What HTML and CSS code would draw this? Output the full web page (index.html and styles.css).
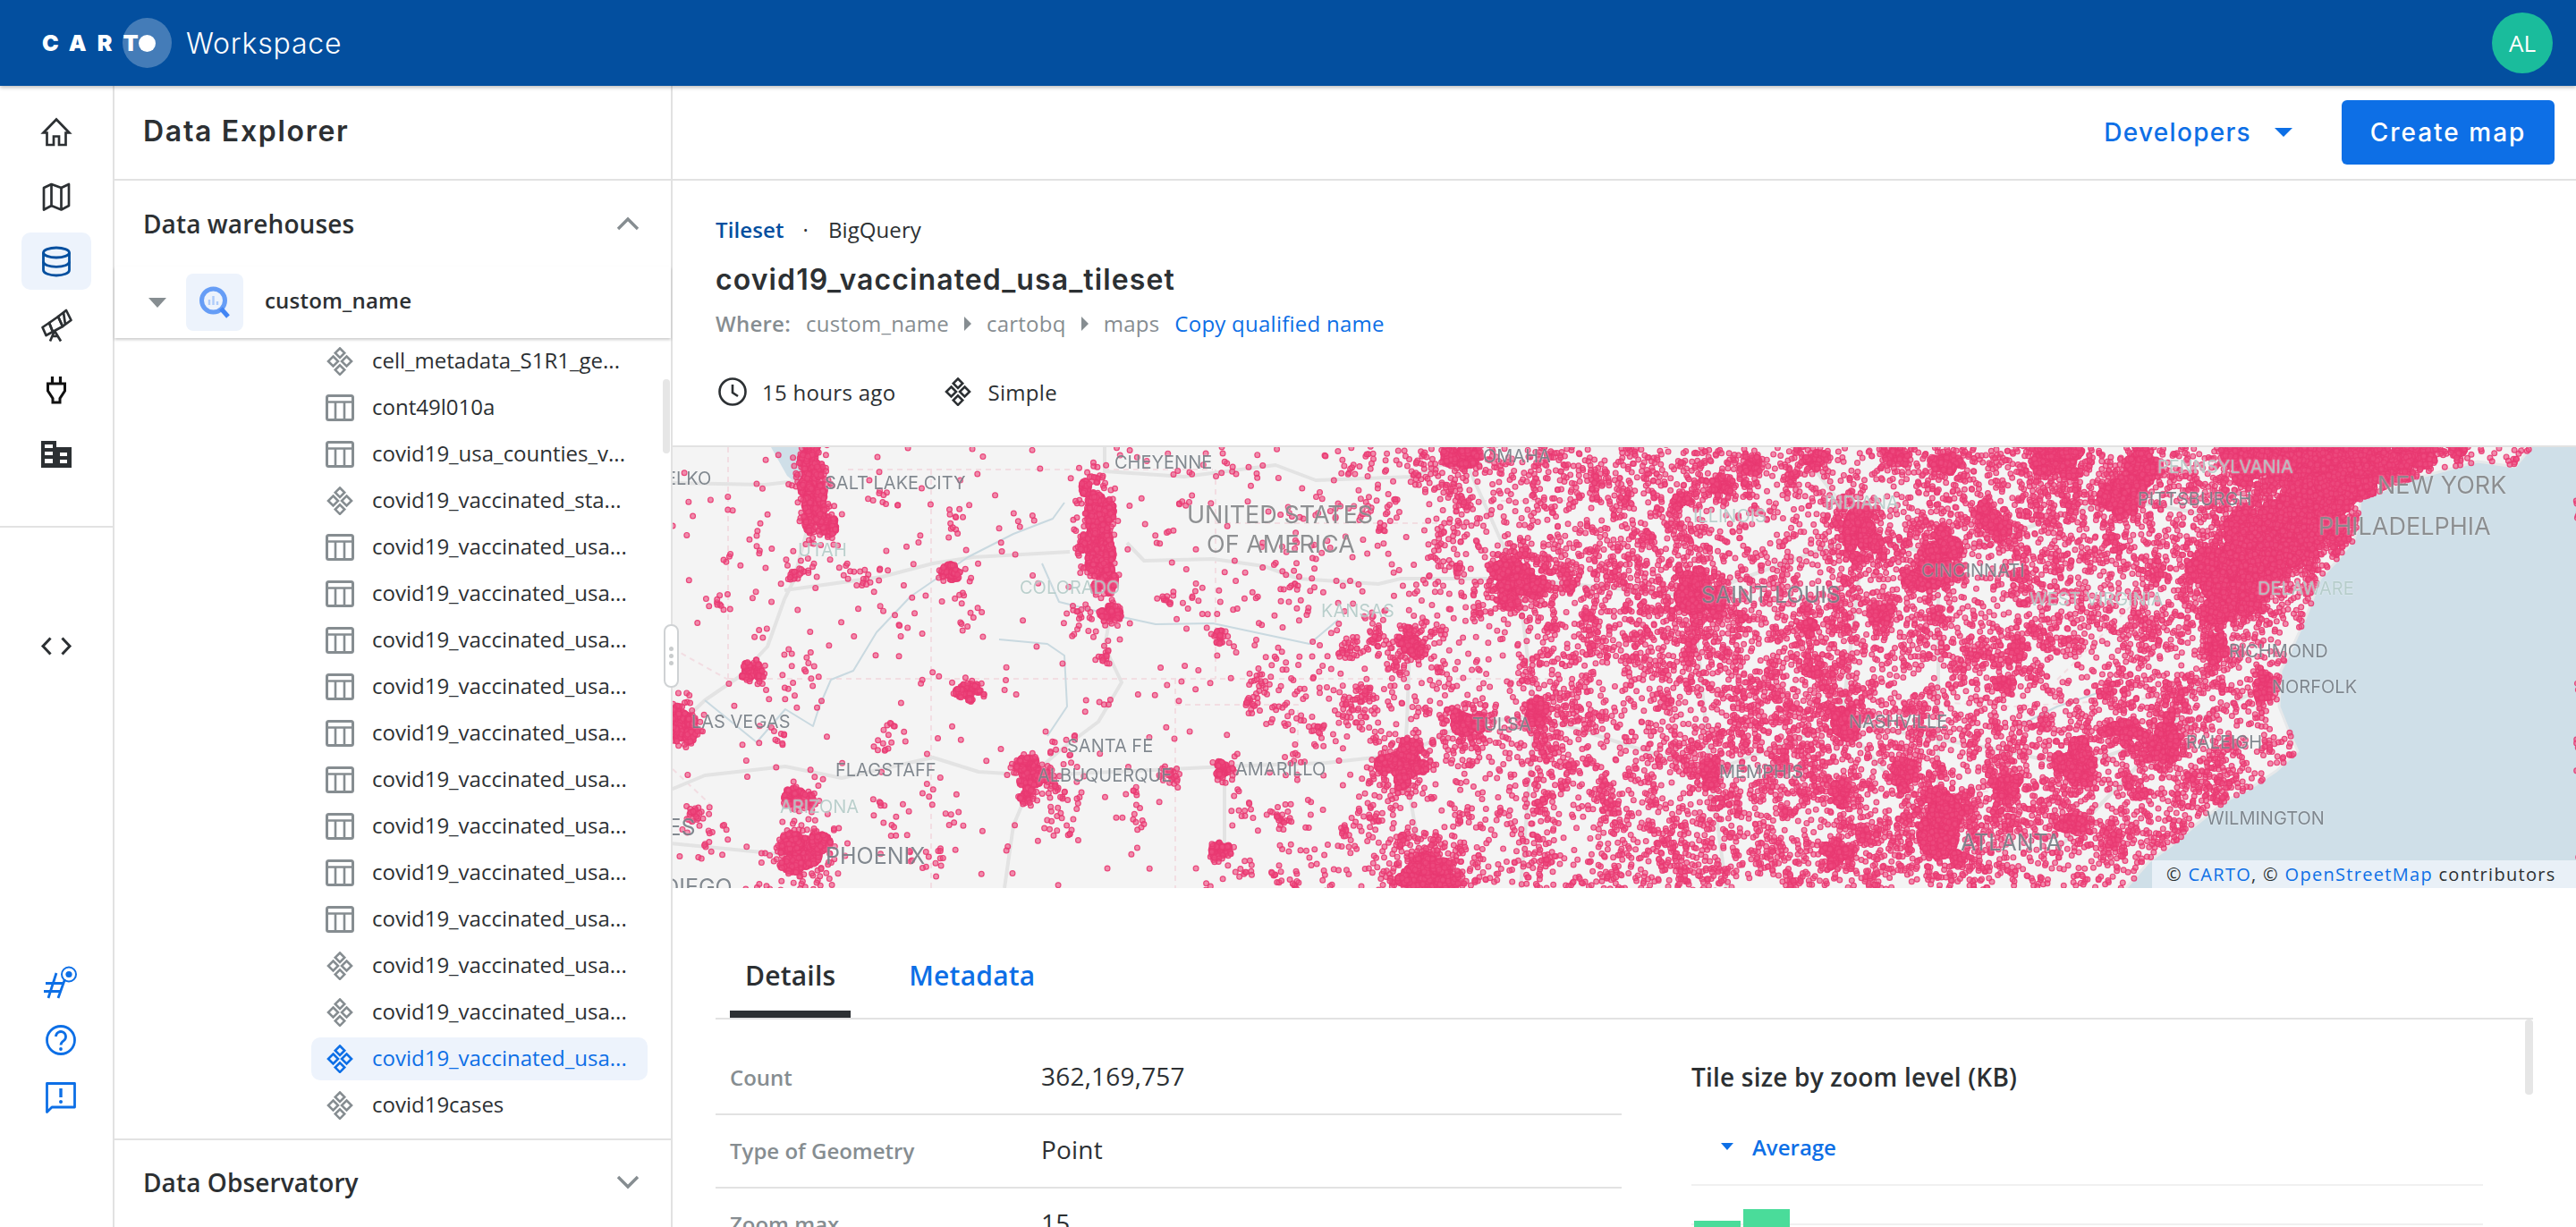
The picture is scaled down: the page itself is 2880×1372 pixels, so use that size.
FILE: index.html
```html
<!DOCTYPE html>
<html lang="en">
<head>
<meta charset="utf-8">
<title>CARTO Workspace</title>
<link rel="stylesheet" href="styles.css">
</head>
<body>
<svg class="defs" width="0" height="0" aria-hidden="true">
  <defs>
    <symbol id="i-tile" viewBox="0 0 32 32">
      <g fill="none" stroke="currentColor" stroke-width="2.6" stroke-linejoin="miter">
        <path d="M16 1.500L21.200 6.700 16 11.900 10.800 6.700Z"/>
        <path d="M8.500 10.500L14 16 8.500 21.500 3 16Z"/>
        <path d="M23.500 10.500L29 16 23.500 21.500 18 16Z"/>
        <path d="M16 20.400L21.200 25.600 16 30.800 10.800 25.600Z"/>
      </g>
    </symbol>
    <symbol id="i-table" viewBox="0 0 32 32">
      <rect x="1.5" y="2.5" width="29" height="27" rx="2" fill="none" stroke="currentColor" stroke-width="3"/>
      <path d="M1.5 9.500H30.500M11 9.500V29M21 9.500V29" fill="none" stroke="currentColor" stroke-width="2.6"/>
    </symbol>
  </defs>
</svg>

<header class="topbar">
  <div class="logo">
    <span class="logo-halo"></span>
    <span class="logo-text">CART</span><span class="logo-dot"></span>
    <span class="logo-name">Workspace</span>
  </div>
  <div class="avatar">AL</div>
</header>

<div class="app">
  <nav class="rail">
    <div class="rail-top">
      <a class="rail-item">
        <svg class="rail-icon" viewBox="0 0 40 40"><path d="M20 5.500L5.500 20.500H9.500V34H17V24.500H23V34H30.500V20.500H34.500Z" fill="none" stroke="currentColor" stroke-width="2.700" stroke-linejoin="miter"/></svg>
      </a>
      <a class="rail-item">
        <svg class="rail-icon" viewBox="0 0 40 40"><path d="M6 10L14.500 6 25.500 10 34 6V30L25.500 34.500 14.500 30 6 34.500ZM14.500 6V30M25.500 10V34.500" fill="none" stroke="currentColor" stroke-width="2.700" stroke-linejoin="round"/></svg>
      </a>
      <a class="rail-item rail-item-active">
        <svg class="rail-icon" viewBox="0 0 40 40"><g fill="none" stroke="currentColor" stroke-width="2.800"><ellipse cx="20" cy="10.500" rx="14.500" ry="5.500"/><path d="M5.500 10.500V30C5.500 33.500 12 36 20 36S34.500 33.500 34.500 30V10.500"/><path d="M5.500 20.500C5.500 24 12 26.300 20 26.300S34.500 24 34.500 20.500"/></g></svg>
      </a>
      <a class="rail-item">
        <svg class="rail-icon" viewBox="0 0 40 40"><g fill="none" stroke="currentColor" stroke-width="2.700" stroke-linejoin="round"><path d="M22 10L31 3 36.500 14 27 21Z"/><path d="M28 5.500L30 19"/><path d="M12 17L22 10 27 21 16 27Z"/><path d="M4.500 22L12 17 16 27 8.500 31Z"/><path d="M18 26L13 37.500M18 26L25 37.500M15.500 32H22"/></g></svg>
      </a>
      <a class="rail-item rail-plug">
        <svg class="rail-icon" viewBox="0 0 40 40"><path d="M15.500 5V13M24.500 5V13" fill="none" stroke="currentColor" stroke-width="3.200"/><path d="M10.500 13H29.500V21L24 29.500V34H16V29.500L10.500 21Z" fill="none" stroke="currentColor" stroke-width="3" stroke-linejoin="miter"/></svg>
      </a>
      <a class="rail-item">
        <svg class="rail-icon" viewBox="0 0 40 40"><path d="M3 5H20V12H37V35H3ZM7 9V13H16V9ZM7 17V21H16V17ZM7 25V30H16V25ZM24 18V22H32V18ZM24 26V30H32V26Z" fill="currentColor" fill-rule="evenodd"/></svg>
      </a>
    </div>
    <div class="rail-mid">
      <a class="rail-item">
        <svg class="rail-icon" viewBox="0 0 40 40"><path d="M13.500 11.500L5 20.500 13.500 29.500M26.500 11.500L35 20.500 26.500 29.500" fill="none" stroke="currentColor" stroke-width="3"/></svg>
      </a>
    </div>
    <div class="rail-bottom">
      <a class="rail-item">
        <svg class="rail-icon" viewBox="0 0 40 40"><g fill="none" stroke="currentColor" stroke-width="2.800"><path d="M15 9L6 37M24.500 16L17 37M3 20.500H24M1 29.500H20"/><ellipse cx="29" cy="10.500" rx="8" ry="8" stroke-width="2"/></g><circle cx="29" cy="10.500" r="3.600" fill="currentColor"/></svg>
      </a>
      <a class="rail-item">
        <svg class="rail-icon" viewBox="0 0 40 40"><circle cx="20" cy="20" r="15.500" fill="none" stroke="currentColor" stroke-width="2.800"/><path d="M14.500 16A5.500 5.500 0 1 1 23.500 20.300C21 22 20 23 20 25.500" fill="none" stroke="currentColor" stroke-width="2.800"/><circle cx="20" cy="30" r="1.900" fill="currentColor"/></svg>
      </a>
      <a class="rail-item">
        <svg class="rail-icon" viewBox="0 0 40 40"><path d="M4.500 4.500H35.500V31H10L4.500 36.500Z" fill="none" stroke="currentColor" stroke-width="2.800" stroke-linejoin="round"/><path d="M20 10V20" fill="none" stroke="currentColor" stroke-width="3.400"/><circle cx="20" cy="25" r="2" fill="currentColor"/></svg>
      </a>
    </div>
  </nav>

  <aside class="panel">
    <div class="panel-title"><h1>Data Explorer</h1></div>
    <div class="acc-head">
      <h2>Data warehouses</h2>
      <svg class="chev" viewBox="0 0 28 18"><path d="M3 15L14 4 25 15" fill="none" stroke="currentColor" stroke-width="3.400"/></svg>
    </div>
    <div class="tree-root">
      <span class="caret caret-grey"></span>
      <span class="bq-box">
        <svg class="bq" viewBox="0 0 36 36"><circle cx="16.500" cy="16" r="13" fill="none" stroke="#669df6" stroke-width="5"/><path d="M12 15V21M16.500 11V21M21 17V21" stroke="#aecbfa" stroke-width="2.400"/><path d="M25 25L33 34" stroke="#4285f4" stroke-width="5"/></svg>
      </span>
      <span class="tree-name">custom_name</span>
    </div>
    <ul class="list">
      <li class="row"><svg class="row-icon"><use href="#i-tile"/></svg><span class="row-text">cell_metadata_S1R1_ge...</span></li>
      <li class="row"><svg class="row-icon"><use href="#i-table"/></svg><span class="row-text">cont49l010a</span></li>
      <li class="row"><svg class="row-icon"><use href="#i-table"/></svg><span class="row-text">covid19_usa_counties_v...</span></li>
      <li class="row"><svg class="row-icon"><use href="#i-tile"/></svg><span class="row-text">covid19_vaccinated_sta...</span></li>
      <li class="row"><svg class="row-icon"><use href="#i-table"/></svg><span class="row-text">covid19_vaccinated_usa...</span></li>
      <li class="row"><svg class="row-icon"><use href="#i-table"/></svg><span class="row-text">covid19_vaccinated_usa...</span></li>
      <li class="row"><svg class="row-icon"><use href="#i-table"/></svg><span class="row-text">covid19_vaccinated_usa...</span></li>
      <li class="row"><svg class="row-icon"><use href="#i-table"/></svg><span class="row-text">covid19_vaccinated_usa...</span></li>
      <li class="row"><svg class="row-icon"><use href="#i-table"/></svg><span class="row-text">covid19_vaccinated_usa...</span></li>
      <li class="row"><svg class="row-icon"><use href="#i-table"/></svg><span class="row-text">covid19_vaccinated_usa...</span></li>
      <li class="row"><svg class="row-icon"><use href="#i-table"/></svg><span class="row-text">covid19_vaccinated_usa...</span></li>
      <li class="row"><svg class="row-icon"><use href="#i-table"/></svg><span class="row-text">covid19_vaccinated_usa...</span></li>
      <li class="row"><svg class="row-icon"><use href="#i-table"/></svg><span class="row-text">covid19_vaccinated_usa...</span></li>
      <li class="row"><svg class="row-icon"><use href="#i-tile"/></svg><span class="row-text">covid19_vaccinated_usa...</span></li>
      <li class="row"><svg class="row-icon"><use href="#i-tile"/></svg><span class="row-text">covid19_vaccinated_usa...</span></li>
      <li class="row row-active"><svg class="row-icon"><use href="#i-tile"/></svg><span class="row-text">covid19_vaccinated_usa...</span></li>
      <li class="row"><svg class="row-icon"><use href="#i-tile"/></svg><span class="row-text">covid19cases</span></li>
    </ul>
    <div class="acc-head acc-bottom">
      <h2>Data Observatory</h2>
      <svg class="chev" viewBox="0 0 28 18"><path d="M3 3L14 14 25 3" fill="none" stroke="currentColor" stroke-width="3.400"/></svg>
    </div>
    <span class="list-thumb"></span>
    <span class="resize-handle"><i></i><i></i><i></i></span>
  </aside>

  <main class="main">
    <div class="actions">
      <a class="dev-link">Developers</a>
      <span class="caret caret-blue"></span>
      <a class="btn">Create map</a>
    </div>

    <section class="info">
      <div class="kind"><span class="kind-type">Tileset</span><span class="kind-sep">·</span><span>BigQuery</span></div>
      <h3 class="ds-title">covid19_vaccinated_usa_tileset</h3>
      <div class="where">
        <span class="where-label">Where:</span>
        <span>custom_name</span><span class="crumb"></span>
        <span>cartobq</span><span class="crumb"></span>
        <span>maps</span>
        <a class="copy">Copy qualified name</a>
      </div>
      <div class="meta">
        <svg class="meta-icon" viewBox="0 0 32 32"><circle cx="16" cy="16" r="14.500" fill="none" stroke="currentColor" stroke-width="2.600"/><path d="M16 8V17L22 21" fill="none" stroke="currentColor" stroke-width="2.600"/></svg>
        <span class="meta-text">15 hours ago</span>
        <svg class="meta-icon meta-tile"><use href="#i-tile"/></svg>
        <span class="meta-text">Simple</span>
      </div>
    </section>

    <section class="map">
      <canvas id="map-canvas" class="map-canvas" width="2128" height="493"></canvas>
      <span class="lbl" style="left:-8px;top:35px">ELKO</span>
      <span class="lbl" style="left:170px;top:40px">SALT LAKE CITY</span>
      <span class="lbl" style="left:494px;top:17px">CHEYENNE</span>
      <span class="lbl" style="left:906px;top:10px">OMAHA</span>
      <span class="lbl lbl-xl" style="left:575px;top:75px">UNITED STATES</span>
      <span class="lbl lbl-xl" style="left:597px;top:108px">OF AMERICA</span>
      <span class="lbl lbl-f" style="left:140px;top:115px">UTAH</span>
      <span class="lbl lbl-f" style="left:388px;top:157px">COLORADO</span>
      <span class="lbl lbl-f" style="left:725px;top:183px">KANSAS</span>
      <span class="lbl" style="left:21px;top:307px">LAS VEGAS</span>
      <span class="lbl" style="left:441px;top:334px">SANTA FE</span>
      <span class="lbl" style="left:408px;top:367px">ALBUQUERQUE</span>
      <span class="lbl" style="left:182px;top:361px">FLAGSTAFF</span>
      <span class="lbl" style="left:629px;top:360px">AMARILLO</span>
      <span class="lbl lbl-f" style="left:120px;top:402px">ARIZONA</span>
      <span class="lbl lbl-lg" style="left:-145px;top:425px">LOS ANGELES</span>
      <span class="lbl lbl-lg" style="left:171px;top:457px">PHOENIX</span>
      <span class="lbl lbl-lg" style="left:-70px;top:492px">SAN DIEGO</span>
      <span class="lbl" style="left:894px;top:310px">TULSA</span>
      <span class="lbl lbl-xl" style="left:1906px;top:42px">NEW YORK</span>
      <span class="lbl" style="left:1638px;top:58px">PITTSBURGH</span>
      <span class="lbl lbl-xl" style="left:1840px;top:88px">PHILADELPHIA</span>
      <span class="lbl lbl-f" style="left:1141px;top:77px">ILLINOIS</span>
      <span class="lbl lbl-f" style="left:1288px;top:62px">INDIANA</span>
      <span class="lbl lbl-f" style="left:1660px;top:22px">PENNSYLVANIA</span>
      <span class="lbl" style="left:1396px;top:138px">CINCINNATI</span>
      <span class="lbl lbl-lg" style="left:1150px;top:165px">SAINT LOUIS</span>
      <span class="lbl lbl-f" style="left:1517px;top:170px">WEST VIRGINIA</span>
      <span class="lbl lbl-f" style="left:1772px;top:158px">DELAWARE</span>
      <span class="lbl" style="left:1740px;top:228px">RICHMOND</span>
      <span class="lbl" style="left:1788px;top:268px">NORFOLK</span>
      <span class="lbl" style="left:1315px;top:307px">NASHVILLE</span>
      <span class="lbl" style="left:1692px;top:330px">RALEIGH</span>
      <span class="lbl" style="left:1170px;top:363px">MEMPHIS</span>
      <span class="lbl" style="left:1715px;top:415px">WILMINGTON</span>
      <span class="lbl lbl-lg" style="left:1440px;top:442px">ATLANTA</span>
      <div class="attrib">© <a>CARTO</a>, © <a>OpenStreetMap</a> contributors</div>
    </section>

    <section class="details">
      <div class="tabs">
        <a class="tab tab-active">Details</a>
        <a class="tab">Metadata</a>
      </div>
      <div class="details-body">
        <div class="facts">
          <div class="fact"><span class="fact-label">Count</span><span class="fact-value">362,169,757</span></div>
          <div class="fact"><span class="fact-label">Type of Geometry</span><span class="fact-value">Point</span></div>
          <div class="fact"><span class="fact-label">Zoom max</span><span class="fact-value">15</span></div>
        </div>
        <div class="chart">
          <h4 class="chart-title">Tile size by zoom level (KB)</h4>
          <div class="chart-select"><span class="caret caret-small"></span><span>Average</span></div>
          <div class="plot">
            <div class="grid-line"></div>
            <div class="bars">
              <span class="bar" style="height:61px"></span>
              <span class="bar" style="height:74px"></span>
            </div>
          </div>
        </div>
        <span class="details-thumb"></span>
      </div>
    </section>
  </main>
</div>
<script src="map.js"></script>
</body>
</html>
```
FILE: styles.css
```css
* { box-sizing: border-box; }
html, body { margin: 0; height: 100%; overflow: hidden; background: #fff; }
body { font-family: "Open Sans", "Liberation Sans", sans-serif; color: #2c3033; width: 2880px; height: 1372px; display: flex; flex-direction: column; }
.defs { position: absolute; }
h1, h2, h3, h4, ul { margin: 0; padding: 0; }

/* top bar */
.topbar { height: 96px; flex: none; background: #034f9f; display: flex; align-items: center; justify-content: space-between; padding: 0 26px 0 47px; box-shadow: 0 2px 4px rgba(0,0,0,.25); position: relative; z-index: 3; }
.logo { display: flex; align-items: center; color: #fff; position: relative; }
.logo-halo { position: absolute; left: 90px; top: 50%; margin-top: -28px; width: 55px; height: 56px; border-radius: 50%; background: rgba(255,255,255,.26); }
.logo-text { font-family: Inter, sans-serif; font-weight: 900; font-size: 25px; letter-spacing: 12px; width: 108px; position: relative; }
.logo-dot { width: 19px; height: 19px; border-radius: 50%; background: #fff; position: relative; }
.logo-name { font-family: Inter, sans-serif; font-weight: 300; font-size: 32px; margin-left: 34px; position: relative; letter-spacing: .8px; }
.avatar { width: 68px; height: 68px; border-radius: 50%; background: #1abc9c; color: #fff; font-family: "Open Sans", sans-serif; font-size: 26px; display: flex; align-items: center; justify-content: center; }

.app { flex: 1; display: flex; min-height: 0; }

/* left rail */
.rail { width: 128px; flex: none; border-right: 2px solid #e2e2e2; display: flex; flex-direction: column; color: #2c3033; }
.rail-top { padding: 20px 0 48px; border-bottom: 2px solid #e2e2e2; display: flex; flex-direction: column; gap: 8px; }
.rail-mid { padding-top: 100px; }
.rail-item { display: flex; align-items: center; justify-content: center; width: 78px; height: 64px; margin-left: 24px; border-radius: 10px; }
.rail-item-active { background: #edf3fc; color: #034f9f; }
.rail-icon { width: 40px; height: 40px; display: block; }
.rail-plug { color: #111; }
.rail-bottom { margin-top: auto; padding: 0 0 113px 5px; color: #0d6fe6; display: flex; flex-direction: column; }

/* panel */
.panel { width: 624px; flex: none; border-right: 2px solid #e2e2e2; display: flex; flex-direction: column; position: relative; }
.panel-title { height: 106px; flex: none; border-bottom: 2px solid #e2e2e2; padding: 0 32px 4px; display: flex; align-items: center; }
h1 { font-family: Inter, sans-serif; font-weight: 600; font-size: 32px; letter-spacing: 1.700px; }
.acc-head { height: 96px; flex: none; display: flex; align-items: center; justify-content: space-between; padding: 0 34px 0 32px; }
h2 { font-size: 28px; font-weight: 600; letter-spacing: .1px; }
.chev { width: 28px; height: 18px; color: #868d91; }
.tree-root { height: 80px; flex: none; display: flex; align-items: center; padding: 0 0 0 38px; box-shadow: 0 2px 3px rgba(0,0,0,.2); position: relative; z-index: 1; }
.caret { display: block; width: 0; height: 0; border-style: solid; border-color: transparent; }
.caret-grey { border-width: 11px 10px 0; border-top-color: #868d91; }
.bq-box { width: 64px; height: 64px; border-radius: 8px; background: #edf3fc; margin-left: 22px; display: flex; align-items: center; justify-content: center; }
.bq { width: 36px; height: 36px; }
.tree-name { font-size: 24px; font-weight: 600; margin-left: 24px; padding-bottom: 5px; letter-spacing: .2px; }
.list { list-style: none; flex: 1; min-height: 0; overflow: hidden; }
.row { height: 52px; display: flex; align-items: center; margin-left: 220px; width: 376px; padding-left: 16px; position: relative; }
.row::before { content: ""; position: absolute; inset: 2px 0; border-radius: 10px; }
.row-active::before { background: #edf3fc; }
.row-icon { width: 32px; height: 32px; color: #868d91; flex: none; position: relative; }
.row-text { font-size: 24px; margin-left: 20px; white-space: nowrap; position: relative; padding-bottom: 3px; }
.row-active .row-icon, .row-active .row-text { color: #0d6fe6; }
.acc-bottom { border-top: 2px solid #e2e2e2; height: 99px; padding-bottom: 4px; }
.list-thumb { position: absolute; left: 613px; top: 328px; width: 8px; height: 83px; background: #e6e6e6; border-radius: 4px; z-index: 2; }
.resize-handle { position: absolute; left: 614px; top: 602px; width: 17px; height: 71px; border: 2px solid #cfd2d4; border-radius: 8px; background: #fff; z-index: 4; display: flex; flex-direction: column; align-items: center; justify-content: center; gap: 3px; }
.resize-handle i { width: 5px; height: 5px; border-radius: 50%; background: #c9cccd; }

/* main */
.main { flex: 1; min-width: 0; display: flex; flex-direction: column; }
.actions { height: 106px; flex: none; border-bottom: 2px solid #e2e2e2; display: flex; align-items: center; justify-content: flex-end; padding: 0 24px 0 0; }
.dev-link { font-family: Inter, sans-serif; font-weight: 500; font-size: 28px; color: #0d6fe6; letter-spacing: 1.300px; }
.caret-blue { border-width: 10px 10px 0; border-top-color: #0d6fe6; margin: 0 55px 0 26px; }
.btn { width: 238px; height: 72px; border-radius: 6px; background: #0d6fe6; color: #fff; font-family: Inter, sans-serif; font-weight: 500; font-size: 28px; letter-spacing: 2px; display: flex; align-items: center; justify-content: center; }

.info { height: 298px; flex: none; padding: 39px 0 0 48px; border-bottom: 2px solid #e2e2e2; display: flex; flex-direction: column; }
.kind { font-size: 24px; line-height: 32px; display: flex; letter-spacing: .1px; }
.kind-type { color: #034f9f; font-weight: 600; }
.kind-sep { margin: 0 22px 0 21px; color: #2c3033; }
.ds-title { font-family: Inter, sans-serif; font-weight: 600; font-size: 32px; line-height: 42px; margin-top: 19px; letter-spacing: 1.100px; }
.where { font-size: 24px; line-height: 32px; margin-top: 12px; color: #868d91; display: flex; align-items: center; letter-spacing: .25px; }
.where-label { font-weight: 600; margin-right: 17px; }
.crumb { width: 0; height: 0; border-style: solid; border-color: transparent; border-width: 8px 0 8px 8px; border-left-color: #868d91; margin: 0 17px; }
.copy { color: #0d6fe6; margin-left: 17px; }
.meta { display: flex; align-items: center; margin-top: 44px; height: 32px; font-size: 24px; letter-spacing: .3px; }
.meta-icon { width: 32px; height: 32px; margin-left: 3px; flex: none; color: #2c3033; }
.meta-text { margin-left: 17px; }
.meta-tile { margin-left: 54px; color: #2c3033; }

.map { height: 493px; flex: none; position: relative; overflow: hidden; background: #f4f4f4; }
.map-canvas { display: block; width: 2128px; height: 493px; }
.lbl { position: absolute; transform: translateY(-50%); font-family: Inter, sans-serif; font-size: 20px; line-height: 1; color: rgba(108,116,124,.85); white-space: nowrap; text-shadow: 0 0 2px rgba(255,255,255,.7); }
.lbl-lg { font-size: 25px; }
.lbl-xl { font-size: 27px; color: rgba(130,132,134,.9); }
.lbl-f { color: rgba(170,196,192,.8); }
.attrib { position: absolute; right: 0; bottom: 0; height: 31px; width: 474px; padding-left: 16px; background: #e9f0f7; font-size: 20px; line-height: 31px; letter-spacing: 1.300px; color: #2c3033; white-space: nowrap; }
.attrib a { color: #0d6fe6; }

.details { flex: 1; min-height: 0; padding: 49px 48px 0; }
.tabs { height: 98px; display: flex; gap: 48px; border-bottom: 2px solid #e2e2e2; }
.tab { height: 96px; padding: 0 17px; display: flex; align-items: center; font-size: 30px; font-weight: 600; color: #0d6fe6; letter-spacing: .2px; }
.tab-active { color: #2c3033; border-bottom: 8px solid #2c3033; padding-top: 8px; margin-left: 16px; }
.details-body { display: flex; position: relative; }
.facts { width: 1013px; flex: none; padding-top: 25px; }
.fact { height: 82px; border-bottom: 2px solid #e2e2e2; display: flex; align-items: center; padding-left: 16px; }
.fact-label { width: 348px; flex: none; font-size: 24px; color: #868d91; font-weight: 600; padding-bottom: 2px; }
.fact-value { font-size: 28px; padding-bottom: 5px; letter-spacing: .2px; }
.chart { margin-left: 78px; width: 885px; padding-top: 48px; }
.chart-title { font-size: 28px; font-weight: 600; line-height: 32px; letter-spacing: .2px; }
.chart-select { margin-top: 46px; height: 32px; display: flex; align-items: center; color: #0d6fe6; font-size: 24px; font-weight: 600; padding-left: 33px; }
.caret-small { border-width: 8px 7px 0; border-top-color: #0d6fe6; margin-right: 21px; }
.plot { margin-top: 26px; border-top: 2px solid #f0f0f0; height: 102px; position: relative; }
.grid-line { margin-top: 42px; border-top: 2px solid #f0f0f0; }
.bars { position: absolute; left: 3px; bottom: 0; display: flex; align-items: flex-end; gap: 3px; }
.bar { width: 52px; background: #4adc9a; display: block; }
.details-thumb { position: absolute; right: 0; top: 0; width: 9px; height: 84px; border-radius: 4px; background: #e6e6e6; }
```
FILE: map.js
```js
(function () {
  var cv = document.getElementById('map-canvas');
  var c = cv.getContext('2d');
  var OX = 752, OY = 500;
  c.translate(-OX, -OY);

  var seed = 1234567;
  function rnd() {
    seed |= 0; seed = seed + 0x6D2B79F5 | 0;
    var t = Math.imul(seed ^ seed >>> 15, 1 | seed);
    t = t + Math.imul(t ^ t >>> 7, 61 | t) ^ t;
    return ((t ^ t >>> 14) >>> 0) / 4294967296;
  }
  function gauss() { return (rnd() + rnd() + rnd() - 1.5) / 0.5; }

  function line(pts, color, w, dash) {
    c.beginPath();
    pts.forEach(function (p, i) { if (i) c.lineTo(p[0], p[1]); else c.moveTo(p[0], p[1]); });
    c.strokeStyle = color; c.lineWidth = w; c.lineJoin = 'round';
    c.setLineDash(dash || []); c.stroke(); c.setLineDash([]);
  }

  c.fillStyle = '#f4f4f4';
  c.fillRect(OX, OY, 2128, 493);

  var coast = [[2830,500],[2812,522],[2770,516],[2700,535],[2655,552],[2639,557],[2636,590],[2632,603],[2612,628],[2594,647],[2582,680],[2575,697],[2560,730],[2550,750],[2548,790],[2558,815],[2569,840],[2545,862],[2518,880],[2490,895],[2454,923],[2428,945],[2403,963],[2377,993]];
  var sea = new Path2D();
  coast.forEach(function (p, i) { if (i) sea.lineTo(p[0], p[1]); else sea.moveTo(p[0], p[1]); });
  sea.lineTo(2880, 993); sea.lineTo(2880, 500); sea.closePath();
  c.fillStyle = '#cfdfe8';
  c.fill(sea);
  line(coast, '#e6e8ea', 3);

  c.fillStyle = '#cfdfe8';
  c.beginPath(); c.moveTo(862,500); c.lineTo(900,500); c.lineTo(906,528); c.lineTo(892,542); c.lineTo(880,532); c.closePath(); c.fill();

  var dash = [6, 5], stateCol = '#f2dde2';
  [[[814,500],[814,760]],[[948,525],[1356,525]],[[1041,525],[1041,993]],[[814,759],[1750,759]],[[1359,525],[1359,759]],
   [[1314,759],[1314,993]],[[1314,788],[1451,788],[1451,880]],[[1359,585],[1668,585]],[[1656,560],[1752,560]],
   [[752,725],[814,760]],[[752,860],[800,905]],[[1900,770],[2250,790],[2420,780]],[[2300,760],[2420,640]],[[2140,890],[2300,880]]
  ].forEach(function (l) { line(l, stateCol, 2, dash); });

  var roads = [
    [[750,540],[855,542],[890,538]],
    [[903,590],[887,650],[877,670],[858,723],[826,757],[788,783],[763,807]],
    [[877,660],[928,653],[986,645],[1043,630],[1088,623],[1196,617]],
    [[1260,607],[1279,627],[1356,625],[1413,633],[1451,647],[1541,653],[1566,647],[1697,647],[1893,667]],
    [[1235,500],[1235,527],[1324,533],[1426,520],[1471,537],[1579,533],[1636,510]],
    [[1241,690],[1235,723],[1254,763],[1228,807],[1184,840],[1158,863],[1133,923],[1123,993]],
    [[750,883],[788,867],[878,857],[941,870],[1043,847],[1094,863],[1158,867],[1311,860],[1369,857],[1483,853],[1573,843],[1636,810],[1716,800],[1912,863]],
    [[750,943],[852,953],[900,957]],[[1369,860],[1369,957]],[[1576,723],[1573,807],[1570,854],[1592,980]],
    [[1893,667],[2084,597],[2167,623],[2365,557],[2550,590]],[[1912,863],[2059,807],[2243,840],[2320,857],[2422,823],[2534,767]],
    [[2632,557],[2486,647],[2476,730],[2422,823],[2300,950]],[[2167,623],[2167,933]],[[2010,500],[2084,597],[2059,807],[2167,933]],
    [[1636,510],[1697,647],[1716,800],[1700,993]],[[1893,667],[1912,863],[1930,993]]
  ];
  roads.forEach(function (r) { line(r, '#e3e3e3', 4); });

  var rivers = [
    [[1190,562],[1177,580],[1133,597],[1082,623],[1018,667],[980,707],[954,750],[929,760],[916,790],[909,812],[878,793],[846,830],[788,783]],
    [[1117,715],[1171,720],[1190,733],[1193,790],[1171,823]],
    [[1165,630],[1184,673],[1241,687],[1292,698],[1356,697],[1464,720],[1496,693]],
    [[2360,770],[2300,790],[2260,810]]
  ];
  rivers.forEach(function (r) { line(r, '#c9d9e0', 2); });

  function dot(x, y) {
    if (c.isPointInPath(sea, x - OX, y - OY)) return;
    c.beginPath();
    c.arc(x, y, 2.9, 0, 6.2832);
    c.fillStyle = 'rgba(238,76,128,.62)';
    c.fill();
    c.lineWidth = 1.200;
    c.strokeStyle = 'rgba(233,58,114,.9)';
    c.stroke();
  }

  function density(x) {
    if (x < 1330) return 0.1;
    if (x < 1560) return 0.1 + (x - 1330) / 230 * 0.3;
    if (x < 1860) return 0.4 + (x - 1560) / 300 * 0.6;
    return 1;
  }

  var i, j, x, y;
  for (i = 0; i < 7500; i++) {
    x = 752 + rnd() * 2128; y = 500 + rnd() * 493;
    if (rnd() < density(x)) dot(x, y);
  }
  for (i = 0; i < 2700; i++) {
    x = 752 + rnd() * 2128; y = 500 + rnd() * 493;
    if (rnd() > density(x)) continue;
    var n = 2 + Math.floor(rnd() * rnd() * 24), s = 4 + rnd() * 11;
    for (j = 0; j < n; j++) dot(x + gauss() * s, y + gauss() * s);
  }

  function ellipse(cx, cy, rx, ry, n) {
    for (var k = 0; k < n; k++) {
      var a = rnd() * 6.2832, r = Math.sqrt(rnd());
      dot(cx + Math.cos(a) * r * rx, cy + Math.sin(a) * r * ry);
    }
  }

  // irregular metro area: a solid core, lobes around it, and a thin scatter
  function blob(cx, cy, rx, ry) {
    var k, a, d, lobes = 5 + Math.floor(rnd() * 4);
    ellipse(cx, cy, rx * 0.68, ry * 0.68, Math.floor(rx * ry * 0.55) + 15);
    for (k = 0; k < lobes; k++) {
      a = rnd() * 6.2832; d = 0.55 + rnd() * 0.55;
      var lr = 0.2 + rnd() * 0.22;
      ellipse(cx + Math.cos(a) * d * rx, cy + Math.sin(a) * d * ry, rx * lr, ry * lr, Math.floor(rx * ry * lr * lr * 1.5) + 5);
    }
    for (k = 0; k < rx * ry * 0.12 + 6; k++) {
      a = rnd() * 6.2832; d = 1 + rnd() * rnd() * 1.1;
      dot(cx + Math.cos(a) * d * rx, cy + Math.sin(a) * d * ry);
    }
  }

  [[907,525,12,25],[909,560,11,30],[924,585,8,14],[1225,570,16,30],[1225,610,15,26],[1235,647,11,16],[1241,687,9,8],
   [1636,510,18,14],[1697,647,27,25],[1576,720,13,15],[1636,810,17,17],[1716,800,12,16],[1570,854,24,24],[1592,980,36,24],
   [900,953,26,24],[763,810,16,20],[1152,863,16,14],[1148,890,7,8],[1062,640,9,7],[839,752,11,9],[1082,773,11,9],
   [1369,860,8,8],[1365,952,10,8],[887,893,9,10],[905,895,7,8],[1880,560,7,7],
   [1893,667,28,26],[2084,597,18,24],[2167,623,18,26],[2150,645,18,14],[2228,583,15,18],[2295,517,36,16],[2365,557,18,22],[1925,543,11,10],
   [2059,807,14,22],[1912,863,13,14],[2167,933,32,38],[2320,857,18,28],[2422,823,16,24],[2476,730,12,15],[2534,767,11,14],
   [2243,877,14,13],[2129,867,12,15],[2058,887,11,11],[2052,957,13,13],[2314,923,15,10],[2103,687,11,12],[2020,703,9,8],
   [2240,765,10,5],[2370,815,22,9],[2395,530,18,22],[2180,515,18,10],[2030,515,12,9],[2120,510,12,9],[1960,520,10,9]
  ].forEach(function (b) { blob(b[0], b[1], b[2], b[3]); });

  // dense north-east corridor
  var band = [[2486,650,36],[2510,625,36],[2540,600,40],[2570,575,42],[2605,552,38],[2635,530,32],[2670,518,18],[2710,508,12],[2750,503,8],[2520,515,26],[2580,515,34],[2640,510,28],[2690,500,20]];
  band.forEach(function (b) { blob(b[0], b[1], b[2], b[2]); });
})();
```
